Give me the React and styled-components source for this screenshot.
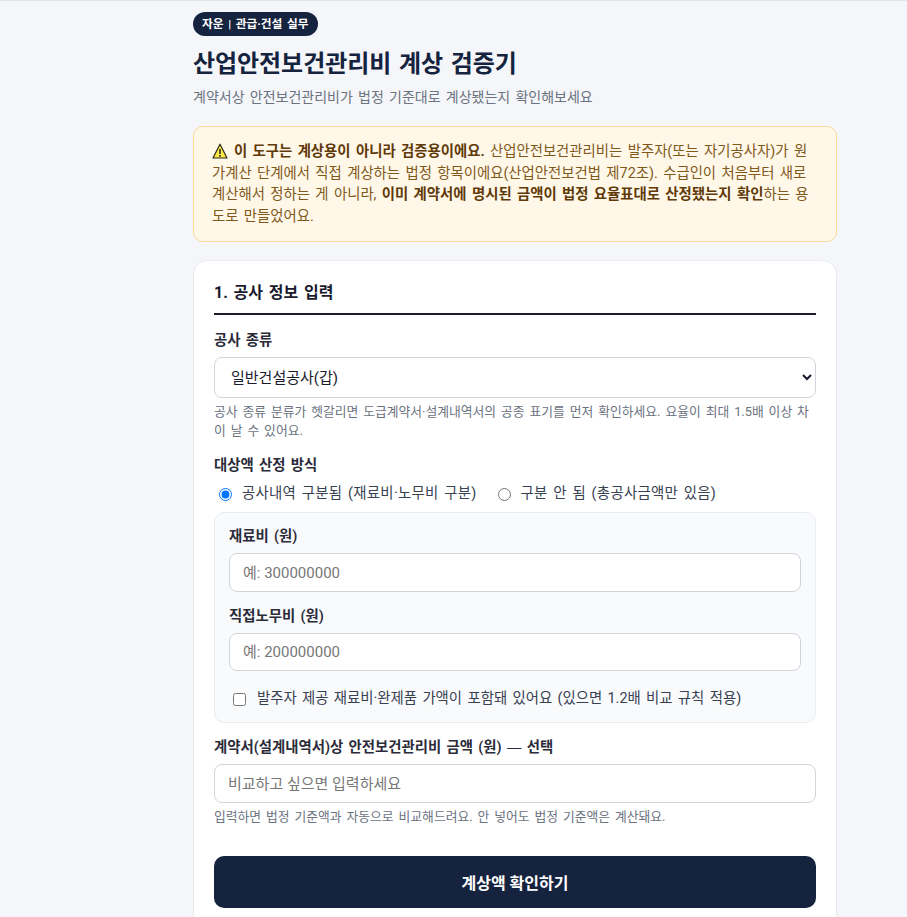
import styled, { createGlobalStyle } from "styled-components";

const GlobalStyle = createGlobalStyle`
  html, body {
    margin: 0;
    height: 100%;
    overflow: hidden;
    background: #f4f6f9;
  }
  body {
    font-family: "Roboto", "Noto Sans CJK KR", sans-serif;
    color: #1a1a2e;
    word-spacing: 0.11em;
  }
  * {
    box-sizing: border-box;
  }
`;

const Page = styled.main`
  height: 100vh;
  overflow: hidden;
  border-top: 1px solid #e3e5e8;
  padding: 11px 70px 0 193px;
`;

const Badge = styled.span`
  display: inline-block;
  height: 24px;
  padding: 0 9px;
  border-radius: 12px;
  background: #16233f;
  color: #fff;
  font-size: 11.7px;
  font-weight: 700;
  line-height: 24px;
`;

const Title = styled.h1`
  margin: 10px 0 0;
  font-size: 24px;
  font-weight: 700;
  line-height: 36px;
  letter-spacing: -0.05px;
  color: #16233f;
`;

const Subtitle = styled.p`
  margin: 5px 0 0;
  font-size: 14px;
  line-height: 20px;
  color: #6b7280;
`;

const Notice = styled.div`
  margin-top: 19px;
  padding: 14px 18px;
  border: 1px solid #fcd999;
  border-radius: 10px;
  background: #fff7e8;
  color: #80591a;
  font-size: 14.4px;
  line-height: 21.6px;

  strong {
    color: #5f3a08;
    font-weight: 700;
  }

  svg {
    vertical-align: -3px;
    margin-right: 6px;
  }
`;

const Card = styled.section`
  margin-top: 18px;
  padding: 21px 20px 40px;
  border: 1px solid #e8eaee;
  border-radius: 14px;
  background: #fff;
`;

const CardTitle = styled.h2`
  margin: 0 0 15px;
  padding-bottom: 9px;
  border-bottom: 2px solid #1a1a2e;
  font-size: 16px;
  font-weight: 700;
  line-height: 22px;
`;

const Field = styled.div`
  margin-bottom: ${(p) => p.$gap ?? 14}px;
`;

const Label = styled.label`
  display: block;
  margin-bottom: 5px;
  font-size: 14.4px;
  font-weight: 600;
  line-height: 22px;
  color: #2b2b3a;
`;

const Dash = styled.span`
  font-family: "Liberation Sans", sans-serif;
  font-weight: 400;
`;

const Select = styled.select`
  display: block;
  width: 100%;
  height: 41px;
  padding: 0 12px;
  border: 1px solid #d1d5db;
  border-radius: 8px;
  background: #fff;
  color: #1a1a2e;
  font: inherit;
  font-size: 15px;
`;

const Input = styled.input`
  display: block;
  width: 100%;
  height: 38.5px;
  padding: 0 13px;
  border: 1px solid #d1d5db;
  border-radius: 8px;
  background: #fff;
  font: inherit;
  font-size: 15px;

  &::placeholder {
    color: #777;
  }
`;

const Hint = styled.p`
  margin: 4px 0 0;
  font-size: 12.8px;
  line-height: 19px;
  color: #6b7280;
`;

const RadioRow = styled.div`
  display: flex;
  gap: 21px;
  margin-bottom: 8px;
  padding-top: 2px;
  letter-spacing: 0.3px;
`;

const Choice = styled.label`
  display: flex;
  align-items: center;
  gap: ${(p) => p.$gap ?? 10}px;
  padding-left: ${(p) => p.$indent ?? 0}px;
  font-size: 14.4px;
  line-height: 20px;
  color: #374151;

  input {
    margin: 0;
    width: 13px;
    height: 13px;
  }
`;

const Breakdown = styled.div`
  margin-bottom: 13px;
  padding: 13px 14px 13px;
  border: 1px solid #e9ecf1;
  border-radius: 10px;
  background: #f9fafc;
`;

const SubmitButton = styled.button`
  display: block;
  width: 100%;
  height: 52px;
  margin-top: 30px;
  border: 0;
  border-radius: 10px;
  background: #16233f;
  color: #fff;
  font: inherit;
  font-size: 16px;
  font-weight: 700;
`;

const WarningIcon = () => (
  <svg width="16" height="16" viewBox="0 0 16 16" aria-hidden="true">
    <path d="M8 1.2 15 15H1z" fill="#ffe94a" stroke="#2a2a1a" strokeWidth="1.2" strokeLinejoin="round" />
    <path d="M8 6v5M8 12v1.8" stroke="#222" strokeWidth="1.5" />
  </svg>
);

export default function App() {
  return (
    <>
      <GlobalStyle />
      <Page>
        <Badge>자운 | 관급·건설 실무</Badge>
        <Title>산업안전보건관리비 계상 검증기</Title>
        <Subtitle>계약서상 안전보건관리비가 법정 기준대로 계상됐는지 확인해보세요</Subtitle>
        <Notice>
          <WarningIcon />
          <strong>이 도구는 계상용이 아니라 검증용이에요.</strong> 산업안전보건관리비는 발주자(또는 자기공사자)가 원가계산 단계에서 직접 계상하는 법정 항목이에요(산업안전보건법 제72조). 수급인이 처음부터 새로 계산해서 정하는 게 아니라, <strong>이미 계약서에 명시된 금액이 법정 요율표대로 산정됐는지 확인</strong>하는 용도로 만들었어요.
        </Notice>
        <Card>
          <CardTitle>1. 공사 정보 입력</CardTitle>
          <Field $gap={15}>
            <Label>공사 종류</Label>
            <Select defaultValue="general-a">
              <option value="general-a">일반건설공사(갑)</option>
            </Select>
            <Hint>공사 종류 분류가 헷갈리면 도급계약서·설계내역서의 공종 표기를 먼저 확인하세요. 요율이 최대 1.5배 이상 차이 날 수 있어요.</Hint>
          </Field>
          <Label>대상액 산정 방식</Label>
          <RadioRow>
            <Choice $indent={5}>
              <input type="radio" name="basis" defaultChecked />
              공사내역 구분됨 (재료비·노무비 구분)
            </Choice>
            <Choice>
              <input type="radio" name="basis" />
              구분 안 됨 (총공사금액만 있음)
            </Choice>
          </RadioRow>
          <Breakdown>
            <Field>
              <Label>재료비 (원)</Label>
              <Input placeholder="예: 300000000" />
            </Field>
            <Field $gap={18}>
              <Label>직접노무비 (원)</Label>
              <Input placeholder="예: 200000000" />
            </Field>
            <Choice $indent={4} $gap={11}>
              <input type="checkbox" />
              발주자 제공 재료비·완제품 가액이 포함돼 있어요 (있으면 1.2배 비교 규칙 적용)
            </Choice>
          </Breakdown>
          <Label>계약서(설계내역서)상 안전보건관리비 금액 (원) <Dash>—</Dash> 선택</Label>
          <Input placeholder="비교하고 싶으면 입력하세요" />
          <Hint>입력하면 법정 기준액과 자동으로 비교해드려요. 안 넣어도 법정 기준액은 계산돼요.</Hint>
          <SubmitButton type="button">계상액 확인하기</SubmitButton>
        </Card>
      </Page>
    </>
  );
}
